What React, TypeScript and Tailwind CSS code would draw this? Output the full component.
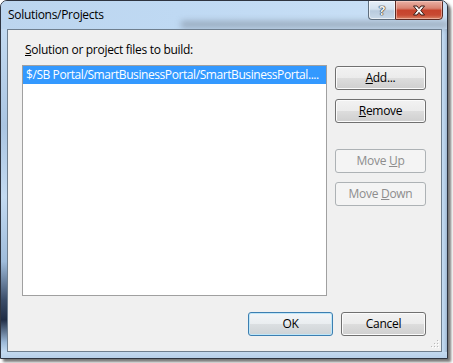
import type { ReactNode } from "react";
import clsx from "clsx";

const uiFont = "font-['Segoe_UI','Open_Sans',sans-serif] tracking-[-0.3px]";

interface ButtonProps {
  children: ReactNode;
  disabled?: boolean;
  primary?: boolean;
  className?: string;
}

function DialogButton({ children, disabled, primary, className }: ButtonProps) {
  return (
    <button
      type="button"
      disabled={disabled}
      className={clsx(
        "flex h-[24px] items-center justify-center rounded-[3px] border text-[12px] leading-none",
        disabled
          ? "border-[#adb2b5] bg-[#f4f4f4] text-[#8d8d8d]"
          : primary
            ? "border-[#3c7fb1] bg-[linear-gradient(to_bottom,#f3f6f8_0%,#e9edf0_50%,#dbdfe2_50%,#ced3d6_100%)] text-black shadow-[inset_0_0_0_1px_#bfe6f8]"
            : "border-[#707070] bg-[linear-gradient(to_bottom,#f2f2f2_0%,#ebebeb_50%,#dddddd_50%,#cfcfcf_100%)] text-black shadow-[inset_0_0_0_1px_#fbfbfb]",
        className
      )}
    >
      {children}
    </button>
  );
}

function CaptionButtons() {
  return (
    <div className="-mt-px mr-[4px] ml-auto flex h-[20px]">
      <div className="flex w-[27px] items-center justify-center rounded-bl-[4px] border border-r-0 border-[#5f6e7d] bg-[linear-gradient(to_bottom,#e6eff8_0%,#d3e1ee_45%,#b9cbdd_55%,#c9d9e8_100%)] shadow-[inset_0_0_0_1px_rgba(255,255,255,0.6)]">
        <span className="text-[13px] leading-none font-bold text-[#f5f5f5] [text-shadow:0_0_1px_#222,0_0_1px_#222,0_0_1px_#222]">
          ?
        </span>
      </div>
      <div className="flex w-[48px] items-center justify-center rounded-br-[4px] border border-[#5b2a22] bg-[linear-gradient(to_bottom,#eab1a5_0%,#d98472_40%,#c7432c_52%,#c84a33_78%,#da8466_100%)] shadow-[inset_0_0_0_1px_rgba(255,220,210,0.5)]">
        <svg width="14" height="11" viewBox="0 0 14 11">
          <path
            d="M1.5 1 L5 1 L7 3.6 L9 1 L12.5 1 L8.8 5.5 L12.5 10 L9 10 L7 7.4 L5 10 L1.5 10 L5.2 5.5 Z"
            fill="#f7f7f7"
            stroke="#3a1a14"
            strokeWidth="1"
            strokeLinejoin="round"
          />
        </svg>
      </div>
    </div>
  );
}

function ResizeGrip() {
  const dots = [
    [8, 0],
    [8, 3],
    [5, 3],
    [8, 6],
    [5, 6],
    [2, 6],
  ];
  return (
    <svg className="absolute right-[2px] bottom-[2px]" width="10" height="9" viewBox="0 0 10 9">
      {dots.map(([x, y]) => (
        <g key={`${x}-${y}`}>
          <rect x={x + 1} y={y + 1} width="1" height="1" fill="#ffffff" />
          <rect x={x} y={y} width="1" height="1" fill="#b8b8b8" />
        </g>
      ))}
    </svg>
  );
}

export default function App() {
  return (
    <div className={clsx("h-[363px] w-[453px] bg-white", uiFont)}>
      <div className="flex h-[359px] w-[448px] flex-col overflow-hidden rounded-t-[7px] border border-[#2e3440] bg-[#c2daf2] shadow-[3px_3px_3px_rgba(0,0,0,0.55)]">
        {/* title bar */}
        <div className="relative flex h-[28px] items-start bg-[linear-gradient(to_right,#bcd5ee_0%,#bfd9f3_40%,#cbe1f6_100%)]">
          <div className="absolute top-[20px] left-[180px] h-[7px] w-[268px] bg-[#7d8a99] opacity-60 blur-[3px]" />
          <span className="relative mt-[6px] ml-[7px] text-[12px] leading-[16px] text-black">
            Solutions/Projects
          </span>
          <div className="relative ml-auto flex">
            <CaptionButtons />
          </div>
        </div>

        {/* body */}
        <div className="flex flex-1">
          <div className="w-[6px] bg-[linear-gradient(to_bottom,#c3daf1_0%,#aac5e2_30%,#c3daf1_52%,#9fbcdb_72%,#3a4c68_84%,#1f2c44_90%,#9cb9d8_97%,#c3daf1_100%)]" />
          <div className="relative flex h-[323px] w-[435px] flex-col border border-[#6f7f8f] bg-[#f0f0f0] pt-[12px] pr-[15px] pl-[14px]">
            <label className="ml-[3px] text-[12px] leading-[16px] text-black">
              <u>S</u>olution or project files to build:
            </label>
            <div className="mt-[7px] flex">
              <div className="h-[231px] w-[305px] border border-[#a0a0a0] bg-white">
                <div className="flex h-[18px] items-center bg-[#3399ff] pl-[3px] text-[12px] tracking-[-0.42px] whitespace-nowrap text-white">
                  $/SB Portal/SmartBusinessPortal/SmartBusinessPortal....
                </div>
              </div>
              <div className="ml-[8px] flex w-[91px] flex-col pt-[1px]">
                <DialogButton>
                  <span>
                    <u>A</u>dd...
                  </span>
                </DialogButton>
                <DialogButton className="mt-[9px]">
                  <span>
                    <u>R</u>emove
                  </span>
                </DialogButton>
                <DialogButton disabled className="mt-[26px]">
                  <span>
                    Move <u>U</u>p
                  </span>
                </DialogButton>
                <DialogButton disabled className="mt-[9px]">
                  <span>
                    Move <u>D</u>own
                  </span>
                </DialogButton>
              </div>
            </div>
            <div className="mt-[16px] flex justify-end gap-[8px]">
              <DialogButton primary className="w-[85px]">
                OK
              </DialogButton>
              <DialogButton className="w-[85px]">Cancel</DialogButton>
            </div>
            <ResizeGrip />
          </div>
          <div className="flex-1 bg-[linear-gradient(to_right,#c6ddf3_0%,#b4cde6_60%,#9fb6cf_100%)]" />
        </div>
        <div className="h-[6px] bg-[linear-gradient(to_bottom,#c3daf1_0%,#b7d0ea_100%)]" />
      </div>
    </div>
  );
}
